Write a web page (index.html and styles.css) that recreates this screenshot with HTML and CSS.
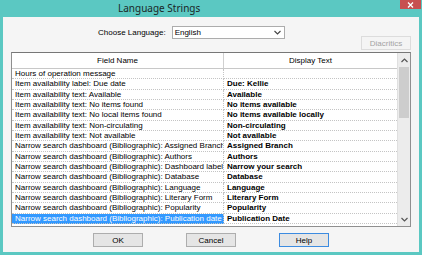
FILE: index.html
```html
<!DOCTYPE html>
<html lang="en">
<head>
    <meta charset="UTF-8">
    <title>Language Strings</title>
    <link rel="stylesheet" href="styles.css">
</head>
<body>

<div class="window">
    <div class="titlebar">
        <div class="title">Language Strings</div>
        <div class="close-btn">
            <svg width="7" height="6" viewBox="0 0 7 6"><path d="M1 0.5 L6 5.5 M6 0.5 L1 5.5" stroke="#fff" stroke-width="1.3"/></svg>
        </div>
    </div>

    <div class="client">
        <div class="top">
            <div class="lang-row">
                <label class="lang-label">Choose Language:</label>
                <div class="select">
                    <span>English</span>
                    <svg width="7" height="5" viewBox="0 0 7 5"><path d="M0.5 1 L3.5 4 L6.5 1" fill="none" stroke="#444" stroke-width="1.1"/></svg>
                </div>
            </div>
            <button class="btn btn-disabled">Diacritics</button>
        </div>

        <div class="grid">
            <div class="grid-body">
                <div class="row header">
                    <div class="cell name">Field Name</div>
                    <div class="cell text">Display Text</div>
                </div>
                <div id="rows"></div>
            </div>
            <div class="scrollbar">
                <div class="sb-arrow">
                    <svg width="7" height="5" viewBox="0 0 7 5"><path d="M0.5 4 L3.5 1 L6.5 4" fill="none" stroke="#555" stroke-width="1.2"/></svg>
                </div>
                <div class="sb-thumb"></div>
                <div class="sb-track"></div>
                <div class="sb-arrow">
                    <svg width="7" height="5" viewBox="0 0 7 5"><path d="M0.5 1 L3.5 4 L6.5 1" fill="none" stroke="#555" stroke-width="1.2"/></svg>
                </div>
            </div>
        </div>

        <div class="actions">
            <button class="btn">OK</button>
            <button class="btn">Cancel</button>
            <button class="btn btn-default">Help</button>
        </div>
    </div>
</div>

<script>
    const strings = [
        ["Hours of operation message", ""],
        ["Item availability label: Due date", "Due: Kellie"],
        ["Item availability text: Available", "Available"],
        ["Item availability text: No items found", "No items available"],
        ["Item availability text: No local items found", "No items available locally"],
        ["Item availability text: Non-circulating", "Non-circulating"],
        ["Item availability text: Not available", "Not available"],
        ["Narrow search dashboard (Bibliographic): Assigned Branch", "Assigned Branch"],
        ["Narrow search dashboard (Bibliographic): Authors", "Authors"],
        ["Narrow search dashboard (Bibliographic): Dashboard label", "Narrow your search"],
        ["Narrow search dashboard (Bibliographic): Database", "Database"],
        ["Narrow search dashboard (Bibliographic): Language", "Language"],
        ["Narrow search dashboard (Bibliographic): Literary Form", "Literary Form"],
        ["Narrow search dashboard (Bibliographic): Popularity", "Popularity"],
        ["Narrow search dashboard (Bibliographic): Publication date", "Publication Date"]
    ];

    const rows = document.getElementById('rows');
    strings.forEach(function(s, i) {
        const selected = i === strings.length - 1 ? ' selected' : '';
        rows.innerHTML += `
            <div class="row${selected}">
                <div class="cell name">${s[0]}</div>
                <div class="cell text">${s[1]}</div>
            </div>`;
    });
</script>
</body>
</html>
```

FILE: styles.css
```css
body {
    margin: 0;
    padding: 0;
    background: #5bc8c2;
    font-family: "Liberation Sans", Arial, sans-serif;
    font-size: 8px;
    color: #000;
}

.window {
    width: 422px;
    height: 255px;
    display: flex;
    flex-direction: column;
}

.titlebar {
    height: 17px;
    display: flex;
    align-items: flex-start;
}

.title {
    flex: 1;
    padding-left: 118px;
    line-height: 17px;
    font-family: "Noto Sans", sans-serif;
    font-size: 10px;
    color: #1a2626;
}

.close-btn {
    width: 21px;
    height: 9px;
    margin-right: 1px;
    background: #c75050;
    display: flex;
    align-items: center;
    justify-content: center;
}

.client {
    flex: 1;
    margin: 0 3px 3px 3px;
    background: #f5f5f5;
    display: flex;
    flex-direction: column;
    padding: 0 8px;
}

.top {
    display: grid;
    grid-template-columns: 1fr auto;
    height: 24px;
    margin-top: 9px;
    margin-bottom: 2px;
}

.lang-row {
    display: flex;
    align-items: center;
    align-self: start;
    height: 13px;
    padding-left: 87px;
    gap: 6px;
}

.select {
    width: 106px;
    height: 11px;
    border: 1px solid #acacac;
    background: #fff;
    display: flex;
    align-items: center;
    justify-content: space-between;
    padding: 0 3px 0 2px;
    box-sizing: content-box;
}

.btn {
    width: 50px;
    height: 14px;
    padding: 0;
    font-family: "Liberation Sans", Arial, sans-serif;
    font-size: 8px;
    color: #000;
    background: #e5e5e5;
    border: 1px solid #adadad;
    box-sizing: border-box;
}

.btn-disabled {
    align-self: end;
    color: #a3a3a3;
    background: #f4f4f4;
    border-color: #dcdcdc;
}

.btn-default {
    border-color: #3c8be0;
}

.grid {
    height: 173px;
    display: flex;
    border: 1px solid #8f8f8f;
    border-top-color: #777;
    background: #fff;
}

.grid-body {
    flex: 1;
    display: flex;
    flex-direction: column;
}

.row {
    display: flex;
    height: 10.33px;
    line-height: 10px;
}

.row.header {
    height: 16px;
    line-height: 15px;
    text-align: center;
    border-bottom: 1px solid #c8c8c8;
    box-sizing: border-box;
}

.cell {
    overflow: hidden;
    white-space: nowrap;
    box-sizing: border-box;
    border-bottom: 1px dotted #c4c4c4;
}

.cell.name {
    width: 212px;
    padding-left: 3px;
    border-right: 1px dotted #c4c4c4;
}

.cell.text {
    flex: 1;
    padding-left: 3px;
    font-weight: bold;
}

.header .cell {
    border-bottom: none;
    padding-left: 0;
    font-weight: normal;
}

.header .cell.name {
    border-right: 1px solid #d0d0d0;
}

.selected .cell.name {
    background: #3399ff;
    color: #fff;
}

.scrollbar {
    width: 12px;
    background: #ececec;
    border-left: 1px solid #e0e0e0;
    display: flex;
    flex-direction: column;
    align-items: center;
}

.sb-arrow {
    height: 14px;
    display: flex;
    align-items: center;
    justify-content: center;
}

.sb-thumb {
    width: 10px;
    height: 51px;
    background: #cdcdcd;
}

.sb-track {
    flex: 1;
}

.actions {
    display: flex;
    justify-content: center;
    gap: 43px;
    margin-top: 6px;
}
```
